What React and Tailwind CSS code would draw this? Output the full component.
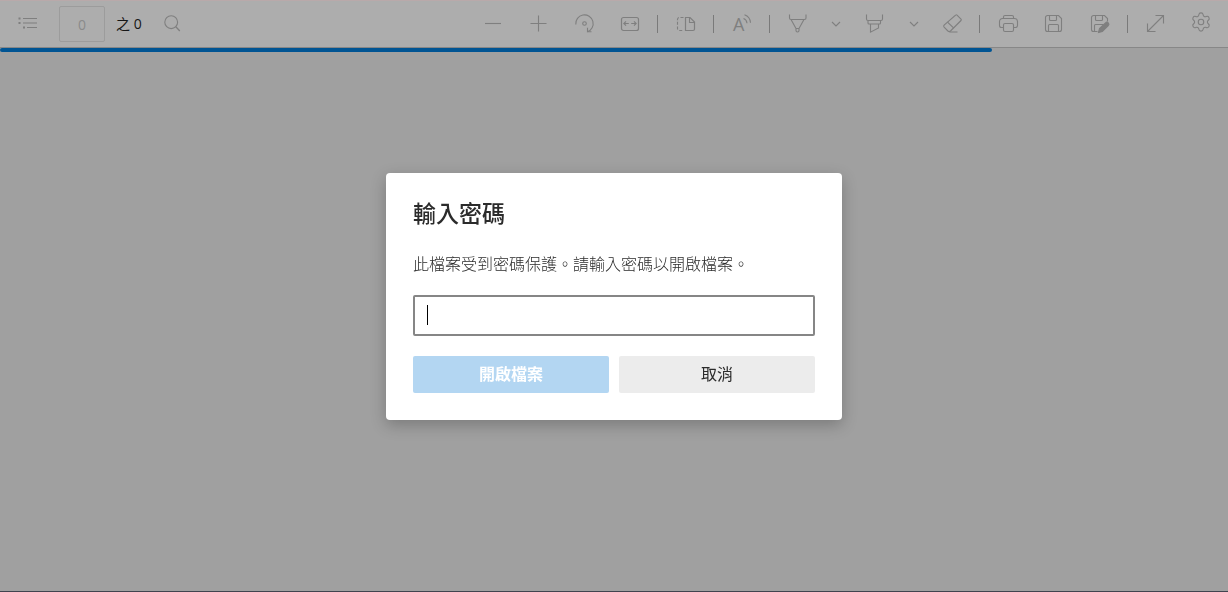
import { useState } from 'react';
import { Settings } from 'lucide-react';

function Icon({ children }) {
  return (
    <svg
      viewBox="0 0 20 20"
      className="w-5 h-5 shrink-0 overflow-visible"
      fill="none"
      stroke="currentColor"
      strokeWidth="1.1"
      aria-hidden="true"
    >
      {children}
    </svg>
  );
}

const icons = {
  contents: (
    <>
      <path d="M5 4.5h14M5 9h14M9 13.5h10" />
      <path d="M0.5 4.5h2M0.5 9h2M5 13.5h2" strokeWidth="2" />
    </>
  ),
  search: (
    <>
      <circle cx="9.2" cy="8.2" r="6.4" />
      <path d="M13.8 12.8L17.8 17" strokeWidth="1.3" />
    </>
  ),
  zoomOut: <path d="M2 9.5h16" />,
  zoomIn: <path d="M1.5 9.5h16M9.5 1.5v16" />,
  rotate: (
    <>
      <path d="M0.8 10.5A8.7 8.7 0 1 1 12.3 17.8" />
      <path d="M12.5 13.8v4h4" />
      <circle cx="9.5" cy="9.5" r="1.8" />
    </>
  ),
  fitWidth: (
    <>
      <rect x="1.5" y="3.5" width="17" height="13" rx="2" strokeWidth="1.2" />
      <path d="M3.8 9.5h5M6 7.3L3.8 9.5 6 11.7M16.2 9.5h-5M14 7.3l2.2 2.2-2.2 2.2" />
    </>
  ),
  pageView: (
    <>
      <path d="M8.5 3.5H4.5a2 2 0 0 0-2 2v9a2 2 0 0 0 2 2h4" strokeDasharray="3 1.6" />
      <path d="M10.5 3.5h4.5l4.5 4.5v7a1.5 1.5 0 0 1-1.5 1.5h-7.5z" strokeWidth="1.2" />
      <path d="M14.5 3.5v5h5" />
    </>
  ),
  readAloud: (
    <>
      <text
        x="2"
        y="16.5"
        fontSize="18"
        fill="currentColor"
        stroke="none"
        className="font-['Open_Sans',sans-serif] font-normal"
      >
        A
      </text>
      <path d="M12.5 4.5a5.5 5.5 0 0 1 3.5 4.7M13.5 0.8a9 9 0 0 1 6 8" />
    </>
  ),
  draw: (
    <>
      <path d="M2.5 0.5v3.5a1.5 1.5 0 0 0 1.5 1.5h13.5a1.5 1.5 0 0 0 1.5-1.5v-3.5" />
      <path d="M4 5.5L9 14.5h3l5-9M9 14.5v2a1.5 1.5 0 0 0 3 0v-2" />
    </>
  ),
  highlight: (
    <>
      <path d="M1.5 0.5v4.5a1.5 1.5 0 0 0 1.5 1.5h13a1.5 1.5 0 0 0 1.5-1.5v-4.5" />
      <path d="M3 6.5v2.5a1 1 0 0 0 1 1h10.5a1 1 0 0 0 1-1v-2.5M5.5 10v8.2l8-4.2v-4" />
    </>
  ),
  erase: (
    <>
      <path d="M13.6 1.1a1 1 0 0 1 1.4 0l4 4a1 1 0 0 1 0 1.4L8.5 17a2 2 0 0 1-2.6 0l-3.8-3.8a1.5 1.5 0 0 1 0-2z" />
      <path d="M5.5 8.2l6.3 6M7.5 18h8" />
    </>
  ),
  print: (
    <>
      <path d="M6.5 4.5v-1.5a1.5 1.5 0 0 1 1.5-1.5h7a1.5 1.5 0 0 1 1.5 1.5v1.5" />
      <path d="M6.5 13.5h-2a2 2 0 0 1-2-2v-4a3 3 0 0 1 3-3h12a3 3 0 0 1 3 3v4a2 2 0 0 1-2 2h-2" />
      <rect x="6.5" y="9.5" width="10" height="8" rx="1.5" />
    </>
  ),
  save: (
    <>
      <path d="M4.5 1.5h11l3 3v11a2 2 0 0 1-2 2h-12a2 2 0 0 1-2-2v-12a2 2 0 0 1 2-2z" />
      <path d="M6.5 1.5v4a1 1 0 0 0 1 1h5a1 1 0 0 0 1-1v-4M5.5 17.5v-6a1 1 0 0 1 1-1h8a1 1 0 0 1 1 1v6" />
    </>
  ),
  saveAs: (
    <>
      <path d="M8.5 17.5h-4a2 2 0 0 1-2-2v-12a2 2 0 0 1 2-2h11l3 3v3" />
      <path d="M6.5 1.5v4a1 1 0 0 0 1 1h5a1 1 0 0 0 1-1v-4M5.5 17.5v-6a1 1 0 0 1 1-1h8" />
      <path
        d="M9.5 18.5l1-4 6-5.6a1.9 1.9 0 0 1 2.8 2.7l-6 5.8z"
        fill="currentColor"
      />
    </>
  ),
  fullScreen: <path d="M3 17L18 2M10.5 1.5h8v8M2.5 9.5v8h8" />,
  chevron: <path d="M6 8l4 4 4-4" />,
};

function ToolButton({ label, icon, width = 'w-[46px]' }) {
  return (
    <button
      type="button"
      aria-label={label}
      className={`${width} h-9 flex items-center justify-center shrink-0`}
    >
      <Icon>{icons[icon]}</Icon>
    </button>
  );
}

function Divider() {
  return (
    <div className="w-[10px] flex justify-center shrink-0">
      <div className="w-px h-[18px] bg-[#7a7a7a]" />
    </div>
  );
}

function Toolbar() {
  const [page, setPage] = useState('0');

  return (
    <header className="flex items-center justify-between h-12 border-t border-t-[#b9a9aa] border-b border-b-[#878787] bg-[#adadad] text-[#7f7f7f] pl-2 pr-1">
      <div className="flex items-center">
        <ToolButton label="目錄" icon="contents" width="w-10" />
        <input
          aria-label="頁碼"
          value={page}
          onChange={(e) => setPage(e.target.value)}
          className="ml-[11px] w-[46px] h-9 border border-[#9c9c9c] rounded-xs text-center text-sm text-[#8a8a8a] outline-none"
        />
        <span className="ml-[11px] text-sm text-[#161616]">之 0</span>
        <ToolButton label="尋找" icon="search" width="w-[60px]" />
      </div>

      <div className="flex items-center">
        <ToolButton label="縮小" icon="zoomOut" />
        <ToolButton label="放大" icon="zoomIn" />
        <ToolButton label="旋轉" icon="rotate" />
        <ToolButton label="符合寬度" icon="fitWidth" width="w-11" />
        <Divider />
        <ToolButton label="頁面檢視" icon="pageView" />
        <Divider />
        <ToolButton label="大聲朗讀" icon="readAloud" />
        <Divider />
        <ToolButton label="繪製" icon="draw" />
        <ToolButton label="繪製選項" icon="chevron" width="w-8" />
        <ToolButton label="醒目提示" icon="highlight" />
        <ToolButton label="醒目提示選項" icon="chevron" width="w-8" />
        <ToolButton label="清除" icon="erase" width="w-11" />
        <Divider />
        <ToolButton label="列印" icon="print" />
        <ToolButton label="儲存" icon="save" />
        <ToolButton label="另存新檔" icon="saveAs" />
        <Divider />
        <ToolButton label="全螢幕" icon="fullScreen" />
        <button
          type="button"
          aria-label="設定"
          className="w-[46px] h-9 flex items-start justify-center pt-[5px] shrink-0"
        >
          <Settings size={22} strokeWidth={1.2} />
        </button>
      </div>
    </header>
  );
}

function PasswordDialog() {
  const [password, setPassword] = useState('');

  return (
    <div className="fixed inset-0 flex items-center justify-center">
      <form
        role="dialog"
        aria-labelledby="dialog-title"
        onSubmit={(e) => e.preventDefault()}
        className="w-full max-w-[456px] rounded bg-white px-[27px] pt-6 pb-[27px] shadow-[0_5px_16px_rgba(0,0,0,0.24)]"
      >
        <h1 id="dialog-title" className="text-[23px] leading-8 font-medium text-[#2b2b2b]">
          輸入密碼
        </h1>
        <label htmlFor="password" className="block mt-6 text-base leading-[22px] font-light text-[#2b2b2b]">
          此檔案受到密碼保護。請輸入密碼以開啟檔案。
        </label>
        <div className="relative mt-5">
          <input
            id="password"
            type="password"
            value={password}
            onChange={(e) => setPassword(e.target.value)}
            className="block w-full h-[41px] rounded-xs border-2 border-[#868686] px-3 text-base caret-transparent outline-none"
          />
          {/* caret */}
          {!password && (
            <span className="absolute left-3.5 top-2.5 w-px h-5 bg-black pointer-events-none" />
          )}
        </div>
        <div className="mt-5 grid grid-cols-2 gap-[10px]">
          <button
            type="submit"
            disabled={!password}
            className="h-[37px] rounded-xs bg-[#0078d4] text-base font-bold text-white disabled:bg-[#b3d6f2]"
          >
            開啟檔案
          </button>
          <button type="button" className="h-[37px] rounded-xs bg-[#ececec] text-base font-normal text-[#2b2b2b]">
            取消
          </button>
        </div>
      </form>
    </div>
  );
}

export default function App() {
  return (
    <div
      lang="zh-TW"
      className="min-h-screen flex flex-col bg-[#a0a0a0] border-b border-b-[#40444f] font-['Open_Sans','Noto_Sans_CJK_TC',sans-serif]"
    >
      <Toolbar />
      <div role="progressbar" aria-label="載入中" className="h-1">
        <div className="w-[80.8%] h-full rounded-xs bg-[#005493]" />
      </div>
      <main className="flex-1" />
      <PasswordDialog />
    </div>
  );
}
